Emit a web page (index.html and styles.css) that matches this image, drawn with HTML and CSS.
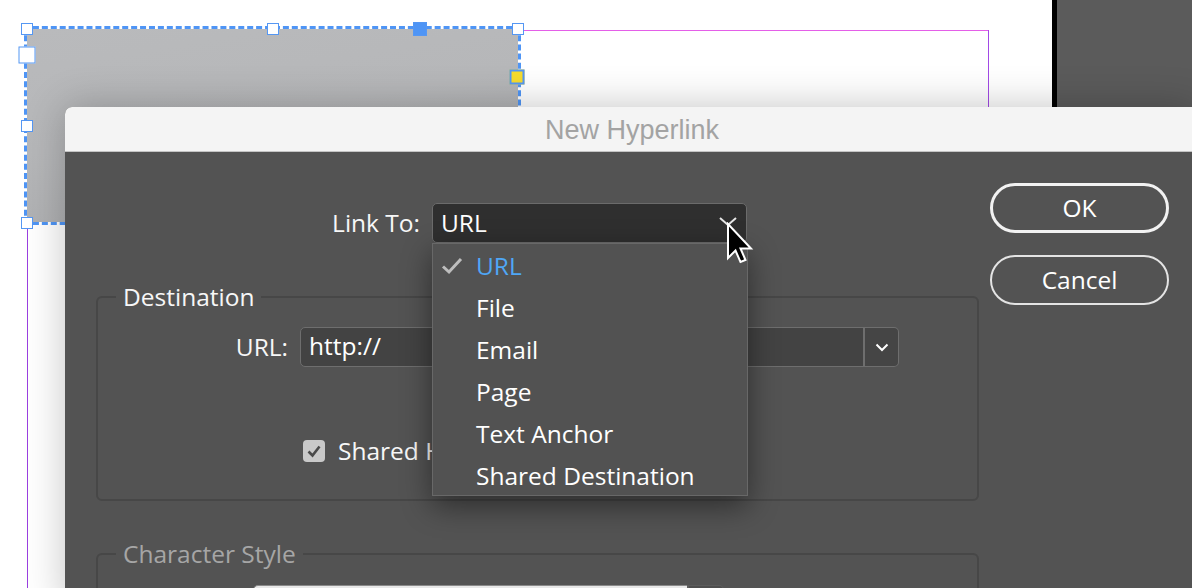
FILE: index.html
```html
<!DOCTYPE html>
<html lang="en">
<head>
<meta charset="utf-8">
<title>New Hyperlink</title>
<link rel="stylesheet" href="styles.css">
</head>
<body>
<div class="stage">
  <div class="canvas">
    <div class="pasteboard"></div>
    <div class="guide guide-top"></div>
    <div class="guide guide-right"></div>
    <div class="guide guide-left"></div>
    <div class="frame"></div>
    <span class="handle h-tl"></span>
    <span class="handle h-tm"></span>
    <span class="handle h-blue"></span>
    <span class="handle h-tr"></span>
    <span class="handle h-big"></span>
    <span class="handle h-ml"></span>
    <span class="handle h-bl"></span>
    <span class="handle h-yellow"></span>
  </div>

  <div class="dialog">
    <div class="titlebar">New Hyperlink</div>
    <div class="dialog-body">
      <div class="main">
        <div class="row linkto-row">
          <label class="lbl lbl-linkto">Link To:</label>
          <div class="select">
            <span>URL</span>
            <svg class="select-chev" width="18" height="10" viewBox="0 0 18 10"><path d="M1 1 L9 8 L17 1" fill="none" stroke="#e6e6e6" stroke-width="2"/></svg>
          </div>
        </div>

        <fieldset class="group dest">
          <legend>Destination</legend>
          <div class="row url-row">
            <label class="lbl lbl-url">URL:</label>
            <div class="combo">
              <div class="combo-field">http://</div>
              <div class="combo-btn"><svg width="14" height="9" viewBox="0 0 14 9"><path d="M1.5 1.5 L7 7 L12.5 1.5" fill="none" stroke="#fff" stroke-width="2"/></svg></div>
            </div>
          </div>
          <div class="row check-row">
            <span class="checkbox"><svg width="22" height="22" viewBox="0 0 22 22"><path d="M5.5 11.5 L9.5 15.5 L16.5 6.5" fill="none" stroke="#4a4a4a" stroke-width="2.6"/></svg></span>
            <span class="check-label">Shared Hyperlink Destination</span>
          </div>
        </fieldset>

        <fieldset class="group charstyle">
          <legend>Character Style</legend>
          <div class="row style-row">
            <div class="combo combo-light">
              <div class="combo-field"></div>
              <div class="combo-btn"></div>
            </div>
          </div>
        </fieldset>
      </div>

      <div class="buttons">
        <button class="btn btn-ok">OK</button>
        <button class="btn btn-cancel">Cancel</button>
      </div>
    </div>

    <ul class="menu">
      <li class="item selected"><span class="mark"><svg width="22" height="18" viewBox="0 0 22 18"><path d="M2 9.5 L8 15 L20 2" fill="none" stroke="#bdbdbd" stroke-width="3"/></svg></span>URL</li>
      <li class="item"><span class="mark"></span>File</li>
      <li class="item"><span class="mark"></span>Email</li>
      <li class="item"><span class="mark"></span>Page</li>
      <li class="item"><span class="mark"></span>Text Anchor</li>
      <li class="item"><span class="mark"></span>Shared Destination</li>
    </ul>
  </div>

  <svg class="cursor" width="30" height="44" viewBox="0 0 30 44">
    <path d="M2 2 L2 36 L9.5 28.5 L14.5 40 L19.5 38 L14.5 26.5 L25 26.5 Z" fill="#000" stroke="#fff" stroke-width="2" stroke-linejoin="miter"/>
  </svg>
</div>
</body>
</html>
```

FILE: styles.css
```css
html, body {
  margin: 0;
  padding: 0;
}

body {
  width: 1192px;
  height: 588px;
  overflow: hidden;
  background: #ffffff;
  font-family: "Open Sans", "Noto Sans", sans-serif;
}

.stage {
  position: relative;
  width: 1192px;
  height: 588px;
  overflow: hidden;
}

/* ---------- document canvas ---------- */
.canvas {
  position: absolute;
  inset: 0;
  background: #ffffff;
}

.pasteboard {
  position: absolute;
  left: 1052px;
  top: 0;
  width: 140px;
  height: 107px;
  box-sizing: border-box;
  border-left: 5px solid #000;
  background: #5b5b5b;
}

.guide {
  position: absolute;
}

.guide-top {
  left: 520px;
  top: 30px;
  width: 469px;
  height: 1px;
  background: #e45fe8;
}

.guide-right {
  left: 988px;
  top: 30px;
  width: 1px;
  height: 80px;
  background: #a24ae6;
}

.guide-left {
  left: 27px;
  top: 224px;
  width: 1px;
  height: 364px;
  background: #9a3fe0;
}

.frame {
  position: absolute;
  left: 24px;
  top: 26px;
  width: 497px;
  height: 199px;
  box-sizing: border-box;
  border: 3px dashed #4f95f5;
  background: linear-gradient(170deg, #b9babc 0%, #b6b7b9 45%, #a9aaac 100%) padding-box;
}

.handle {
  position: absolute;
  width: 12px;
  height: 12px;
  box-sizing: border-box;
  background: #ffffff;
  border: 1.5px solid #5597f3;
  transform: translate(-50%, -50%);
}

.h-tl { left: 27px; top: 29px; }
.h-tm { left: 273px; top: 29px; }
.h-tr { left: 518px; top: 29px; }
.h-ml { left: 27px; top: 126px; }
.h-bl { left: 27px; top: 223px; }
.h-big { left: 27px; top: 55px; width: 17px; height: 17px; }
.h-blue { left: 420px; top: 29px; width: 14px; height: 14px; background: #4f95f5; }
.h-yellow { left: 517px; top: 77px; width: 15px; height: 15px; background: #f7dc2d; border-width: 2px; }

/* ---------- dialog ---------- */
.dialog {
  position: absolute;
  left: 65px;
  top: 107px;
  width: 1134px;
  height: 500px;
  display: flex;
  flex-direction: column;
  background: #535353;
  border-radius: 7px 7px 0 0;
  box-shadow: 0 0 40px rgba(0, 0, 0, 0.24);
}

.titlebar {
  flex: none;
  height: 45px;
  box-sizing: border-box;
  padding-top: 3px;
  display: flex;
  align-items: center;
  justify-content: center;
  background: #f4f4f4;
  border-bottom: 1px solid #c4c4c4;
  border-radius: 7px 7px 0 0;
  font-family: "Liberation Sans", Arial, sans-serif;
  font-size: 27px;
  color: #a3a3a3;
}

.dialog-body {
  display: flex;
  gap: 11px;
  padding-left: 31px;
  color: #f7f7f7;
  font-size: 24.5px;
  font-weight: 500;
}

.main {
  width: 883px;
  flex: none;
}

.row {
  display: flex;
  align-items: center;
}

.lbl {
  text-align: right;
  line-height: 32px;
}

.linkto-row {
  margin-top: 51px;
  height: 40px;
}

.lbl-linkto {
  width: 324px;
  margin-right: 12px;
}

.select {
  width: 315px;
  height: 40px;
  box-sizing: border-box;
  display: flex;
  align-items: center;
  justify-content: space-between;
  padding: 0 8px 0 8px;
  background: #2f2f2f;
  border: 1px solid #6b6b6b;
  border-radius: 5px;
  color: #ffffff;
  line-height: 32px;
}

.select-chev {
  margin-top: -2px;
  margin-right: 1px;
}

/* fieldset groups */
.group {
  margin: 0;
  padding: 0;
  border: 2px solid #474747;
  border-radius: 6px;
  min-inline-size: 0;
}

.group legend {
  margin-left: 18px;
  padding: 0 7px;
  line-height: 28px;
  font-size: 24.5px;
  color: #f7f7f7;
}

.dest {
  margin-top: 40px;
  padding-bottom: 28px;
}

.url-row {
  margin-top: 16px;
  height: 40px;
}

.lbl-url {
  width: 190px;
  margin-right: 12px;
}

.combo {
  display: flex;
  height: 40px;
}

.combo-field {
  width: 564px;
  height: 40px;
  box-sizing: border-box;
  padding-left: 8px;
  background: #434343;
  border: 1px solid #6e6e6e;
  border-radius: 5px 0 0 5px;
  line-height: 36px;
  color: #ffffff;
}

.combo-btn {
  width: 36px;
  height: 40px;
  box-sizing: border-box;
  display: flex;
  align-items: center;
  justify-content: center;
  background: #454545;
  border: 1px solid #6e6e6e;
  border-left: 2px solid #6e6e6e;
  border-radius: 0 5px 5px 0;
  margin-left: -1px;
}

.check-row {
  margin-top: 64px;
  height: 40px;
  padding-left: 205px;
  gap: 13px;
}

.checkbox {
  width: 22px;
  height: 22px;
  flex: none;
  background: #c9c9c9;
  border-radius: 4px;
  display: flex;
}

.check-label {
  line-height: 32px;
  white-space: nowrap;
}

.charstyle {
  margin-top: 39px;
  height: 120px;
}

.charstyle legend {
  color: #a6a6a6;
}

.style-row {
  margin-top: 17px;
  padding-left: 155px;
}

.combo-light .combo-field {
  width: 435px;
  background: #e8e8e8;
  border-color: #8a8a8a;
}

.combo-light .combo-btn {
  width: 37px;
  background: #4e4e4e;
  border-color: #5c5c5c;
}

/* buttons */
.buttons {
  display: flex;
  flex-direction: column;
  gap: 22px;
  margin-top: 31px;
}

.btn {
  width: 179px;
  height: 50px;
  box-sizing: border-box;
  border-radius: 25px;
  background: transparent;
  color: #ffffff;
  font-family: "Open Sans", "Noto Sans", sans-serif;
  font-size: 24.5px;
  font-weight: 500;
  line-height: 1;
  padding: 0;
}

.btn-ok {
  border: 3px solid #f2f2f2;
}

.btn-cancel {
  border: 2px solid #e4e4e4;
}

/* popup menu (overlay, covers part of the dialog) */
.menu {
  position: absolute;
  left: 367px;
  top: 136px;
  width: 316px;
  height: 253px;
  box-sizing: border-box;
  margin: 0;
  padding: 1px 0;
  list-style: none;
  background: #525252;
  border: 1px solid #686868;
  box-shadow: 0 10px 28px rgba(0, 0, 0, 0.45);
  color: #ffffff;
  font-size: 24.5px;
  font-weight: 500;
}

.item {
  height: 42px;
  display: flex;
  align-items: center;
  line-height: 32px;
}

.mark {
  width: 43px;
  flex: none;
  display: flex;
  padding-left: 8px;
  box-sizing: border-box;
}

.item.selected {
  color: #4fa7f6;
}

/* mouse pointer (overlay) */
.cursor {
  position: absolute;
  left: 726px;
  top: 222px;
}
```
